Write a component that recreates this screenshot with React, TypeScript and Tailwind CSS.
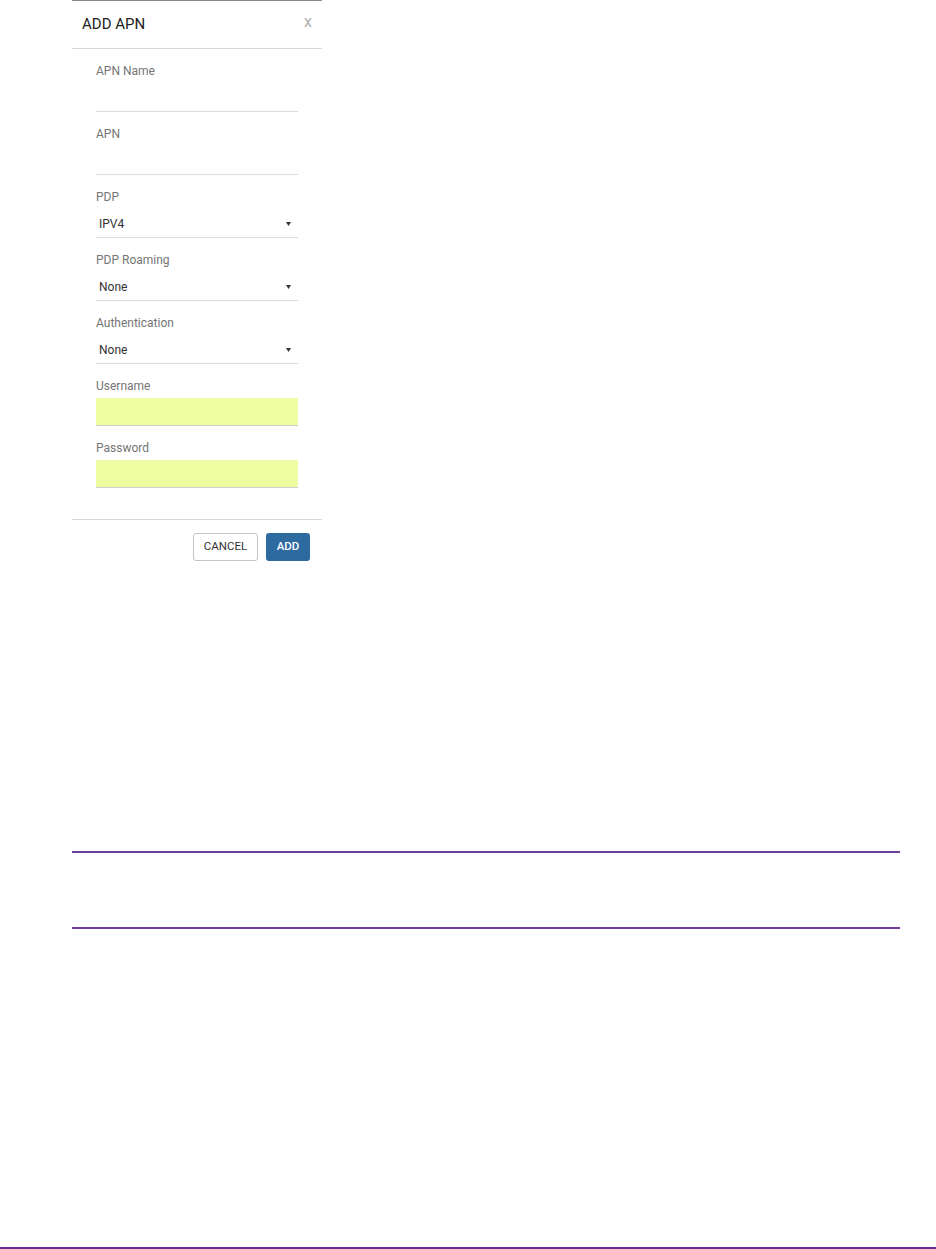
import React from "react";

const font = { fontFamily: "Roboto, 'Liberation Sans', sans-serif" };

function Arrow() {
  return (
    <svg width="5" height="4" viewBox="0 0 5 4" className="shrink-0">
      <path d="M0 0 H5 L2.5 4 Z" fill="#333" />
    </svg>
  );
}

function TextField({ label, first }: { label: string; first?: boolean }) {
  return (
    <div className={first ? "" : "mt-[14px]"}>
      <div className="h-4 text-[12px] leading-4 text-[#757575]">{label}</div>
      <div className="h-[33px] border-b border-[#dcdcdc]" />
    </div>
  );
}

function SelectField({ label, value }: { label: string; value: string }) {
  return (
    <div className="mt-[14px]">
      <div className="h-4 text-[12px] leading-4 text-[#757575]">{label}</div>
      <div className="flex h-[33px] items-center justify-between border-b border-[#dcdcdc] pl-[3px] pr-[7px] pt-[6px]">
        <span className="text-[12px] leading-4 text-[#333]">{value}</span>
        <Arrow />
      </div>
    </div>
  );
}

function FilledField({ label }: { label: string }) {
  return (
    <div className="mt-[14px]">
      <div className="h-4 text-[12px] leading-4 text-[#757575]">{label}</div>
      <div className="mt-[4px] h-[28px] border-b border-[#cfcfcf] bg-[#effda2]" />
    </div>
  );
}

export default function App() {
  return (
    <div className="relative flex h-[1249px] flex-col bg-white" style={font}>
      <div className="ml-[72px] w-[250px] border-t border-[#8a8a8a]">
        <div className="flex h-[48px] items-center justify-between border-b border-[#d8d8d8] pl-[10px] pr-[10px]">
          <span className="text-[15px] text-[#222]">ADD APN</span>
          <span className="-mt-[6px] text-[16px] leading-4 text-[#b0b0b0]">x</span>
        </div>
        <div className="px-6 pt-[14px] pb-[31px]">
          <TextField label="APN Name" first />
          <TextField label="APN" />
          <SelectField label="PDP" value="IPV4" />
          <SelectField label="PDP Roaming" value="None" />
          <SelectField label="Authentication" value="None" />
          <FilledField label="Username" />
          <FilledField label="Password" />
        </div>
        <div className="flex justify-end gap-2 border-t border-[#d8d8d8] pr-[12px] pt-[13px]">
          <button className="h-[28px] w-[65px] rounded-[3px] border border-[#c4c4c4] bg-white text-[11.5px] text-[#333]">
            CANCEL
          </button>
          <button className="h-[28px] w-[44px] rounded-[3px] bg-[#2c6aa0] text-[11.5px] font-medium text-white">
            ADD
          </button>
        </div>
      </div>
      <div className="ml-[72px] mt-[290px] h-[78px] w-[828px] border-y-2 border-[#6f3d9b]" />
      <div className="flex-1" />
      <div className="h-[2px] w-full bg-[#652d90]" />
    </div>
  );
}
